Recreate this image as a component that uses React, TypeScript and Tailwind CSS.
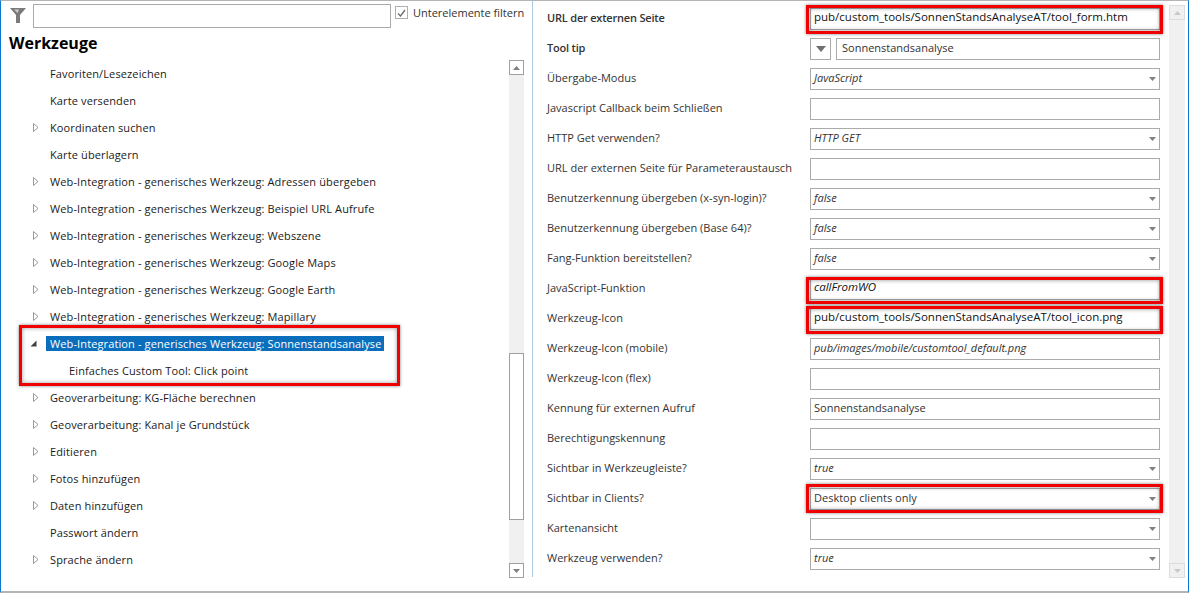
import React from 'react';

const treeTop = [
  { label: 'Favoriten/Lesezeichen' },
  { label: 'Karte versenden' },
  { label: 'Koordinaten suchen', arrow: true },
  { label: 'Karte überlagern' },
  { label: 'Web-Integration - generisches Werkzeug: Adressen übergeben', arrow: true },
  { label: 'Web-Integration - generisches Werkzeug: Beispiel URL Aufrufe', arrow: true },
  { label: 'Web-Integration - generisches Werkzeug: Webszene', arrow: true },
  { label: 'Web-Integration - generisches Werkzeug: Google Maps', arrow: true },
  { label: 'Web-Integration - generisches Werkzeug: Google Earth', arrow: true },
  { label: 'Web-Integration - generisches Werkzeug: Mapillary', arrow: true },
];

const treeBottom = [
  { label: 'Geoverarbeitung: KG-Fläche berechnen', arrow: true },
  { label: 'Geoverarbeitung: Kanal je Grundstück', arrow: true },
  { label: 'Editieren', arrow: true },
  { label: 'Fotos hinzufügen', arrow: true },
  { label: 'Daten hinzufügen', arrow: true },
  { label: 'Passwort ändern' },
  { label: 'Sprache ändern', arrow: true },
];

type Field = {
  label: string;
  value?: string;
  kind: 'text' | 'select' | 'tip';
  italic?: boolean;
  bold?: boolean;
  big?: boolean;
  red?: string;
};

const fields: Field[] = [
  { label: 'URL der externen Seite', value: 'pub/custom_tools/SonnenStandsAnalyseAT/tool_form.htm', kind: 'text', bold: true, big: true, red: '-top-[3px] -bottom-[4px]' },
  { label: 'Tool tip', value: 'Sonnenstandsanalyse', kind: 'tip', bold: true },
  { label: 'Übergabe-Modus', value: 'JavaScript', kind: 'select', italic: true },
  { label: 'Javascript Callback beim Schließen', kind: 'text' },
  { label: 'HTTP Get verwenden?', value: 'HTTP GET', kind: 'select', italic: true },
  { label: 'URL der externen Seite für Parameteraustausch', kind: 'text' },
  { label: 'Benutzerkennung übergeben (x-syn-login)?', value: 'false', kind: 'select', italic: true },
  { label: 'Benutzerkennung übergeben (Base 64)?', value: 'false', kind: 'select', italic: true },
  { label: 'Fang-Funktion bereitstellen?', value: 'false', kind: 'select', italic: true },
  { label: 'JavaScript-Funktion', value: 'callFromWO', kind: 'text', italic: true, big: true, red: '-top-[1px] -bottom-[4px]' },
  { label: 'Werkzeug-Icon', value: 'pub/custom_tools/SonnenStandsAnalyseAT/tool_icon.png', kind: 'text', big: true, red: '-top-[2px] -bottom-[4px]' },
  { label: 'Werkzeug-Icon (mobile)', value: 'pub/images/mobile/customtool_default.png', kind: 'text', italic: true },
  { label: 'Werkzeug-Icon (flex)', kind: 'text' },
  { label: 'Kennung für externen Aufruf', value: 'Sonnenstandsanalyse', kind: 'text' },
  { label: 'Berechtigungskennung', kind: 'text' },
  { label: 'Sichtbar in Werkzeugleiste?', value: 'true', kind: 'select', italic: true },
  { label: 'Sichtbar in Clients?', value: 'Desktop clients only', kind: 'select', red: '-top-[4px] -bottom-[3px]' },
  { label: 'Kartenansicht', kind: 'select' },
  { label: 'Werkzeug verwenden?', value: 'true', kind: 'select', italic: true },
];

const Arrow = ({ open }: { open?: boolean }) =>
  open ? (
    <svg width="7" height="7" viewBox="0 0 7 7" className="block">
      <path d="M6.5 0.5V6.5H0.5Z" fill="#404040" />
    </svg>
  ) : (
    <svg width="6" height="9" viewBox="0 0 6 9" className="block">
      <path d="M0.5 0.5L5 4.5L0.5 8.5Z" fill="#fff" stroke="#9a9a9a" />
    </svg>
  );

const Caret = ({ color = '#808080' }: { color?: string }) => (
  <svg width="7" height="4" viewBox="0 0 7 4" className="block">
    <path d="M0 0H7L3.5 4Z" fill={color} />
  </svg>
);

const CaretUp = ({ color = '#808080' }: { color?: string }) => (
  <svg width="7" height="4" viewBox="0 0 7 4" className="block">
    <path d="M0 4H7L3.5 0Z" fill={color} />
  </svg>
);

const TreeRow = ({ label, arrow }: { label: string; arrow?: boolean }) => (
  <div className="h-[27px] flex items-center">
    <div className="w-[49px] shrink-0 pl-[32px]">{arrow && <Arrow />}</div>
    <span className="text-[#1a1a1a] tracking-[0.12px] whitespace-nowrap">{label}</span>
  </div>
);

const FieldControl = ({ f }: { f: Field }) => {
  const box = 'h-[22px] flex items-center border border-[#ababab] bg-white px-[3px] pb-[4px] text-[#333] whitespace-nowrap';
  const cls = `${f.italic ? 'italic' : ''} ${f.big ? 'text-[11.5px] text-[#111]' : ''}`;
  if (f.kind === 'tip') {
    return (
      <div className="flex gap-[5px]">
        <div className="w-[21px] h-[22px] border border-[#ababab] flex items-center justify-center">
          <svg width="10" height="6" viewBox="0 0 10 6"><path d="M0 0H10L5 6Z" fill="#707070" /></svg>
        </div>
        <div className={`${box} flex-1 pl-[5px]`}>{f.value}</div>
      </div>
    );
  }
  if (f.kind === 'select') {
    return (
      <div className={`${box} justify-between pr-[3px]`}>
        <span className={cls}>{f.value}</span>
        <span className="pt-[4px]"><Caret /></span>
      </div>
    );
  }
  return (
    <div className={box}>
      <span className={cls}>{f.value}</span>
    </div>
  );
};

const FieldRow = ({ f }: { f: Field }) => (
  <div className="h-[30px] flex items-center">
    <div className={`w-[263px] shrink-0 pb-[3px] whitespace-nowrap text-[#333] ${f.bold ? 'font-semibold tracking-[-0.2px]' : ''}`}>{f.label}</div>
    <div className="w-[350px] relative">
      <FieldControl f={f} />
      {f.red && (
        <div className={`absolute -left-[4px] -right-[3px] ${f.red} border-[3px] border-[#f00000] shadow-[0_0_3px_rgba(0,0,0,0.5),inset_0_0_4px_rgba(0,0,0,0.45)]`} />
      )}
    </div>
  </div>
);

export default function App() {
  return (
    <div
      className="w-[1189px] h-[593px] overflow-hidden bg-white flex border-t border-t-[#b4b4b4] border-b-2 border-b-[#b4b4b4] border-l border-l-[#0a78d0] border-r border-r-[#0a78d0] text-[11px] leading-none"
      style={{ fontFamily: '"Open Sans", "Noto Sans", sans-serif' }}
    >
      <div className="w-[531px] shrink-0 h-[590px] flex flex-col">
        <div className="h-[27px] shrink-0 flex">
          <div className="w-[32px] pl-[9px] pt-[7px]">
            <svg width="16" height="15" viewBox="0 0 16 15" className="block">
              <path d="M0 0H16L10 7V15H6V7Z" fill="#7a7a7a" />
              <path d="M4 1.5H9L7.5 5Z" fill="#cfcfcf" />
            </svg>
          </div>
          <div className="w-[358px] h-[24px] mt-[3px] border border-[#ababab]" />
          <div className="ml-[4px] mt-[5px] w-[13px] h-[13px] border border-[#b0b0b0] flex items-center justify-center">
            <svg width="9" height="8" viewBox="0 0 9 8"><path d="M1 4.5L3.5 7L8 1" fill="none" stroke="#707070" strokeWidth="1.4" /></svg>
          </div>
          <span className="ml-[5px] mt-[6px] text-[#333] whitespace-nowrap">Unterelemente filtern</span>
        </div>
        <div className="h-[32px] shrink-0 pl-[8px] pb-[2px] flex items-center text-[16px] font-bold text-black">Werkzeuge</div>
        <div className="flex flex-1 min-h-0">
          <div className="w-[508px] shrink-0">
            {treeTop.map((r) => (
              <TreeRow key={r.label} {...r} />
            ))}
            <div className="relative">
              <div className="h-[27px] flex items-center">
                <div className="w-[45px] shrink-0 pl-[29px]"><Arrow open /></div>
                <span className="bg-[#0a6ebd] text-white h-[15px] w-[338px] pl-[4px] flex items-center tracking-[0.12px] whitespace-nowrap">
                  Web-Integration - generisches Werkzeug: Sonnenstandsanalyse
                </span>
              </div>
              <div className="h-[27px] flex items-center pl-[68px] text-[#1a1a1a] tracking-[0.12px] whitespace-nowrap">Einfaches Custom Tool: Click point</div>
              <div className="absolute left-[18px] top-[-5px] w-[381px] h-[61px] border-[3px] border-[#f00000] shadow-[0_0_3px_rgba(0,0,0,0.5),inset_0_0_4px_rgba(0,0,0,0.4)]" />
            </div>
            {treeBottom.map((r) => (
              <TreeRow key={r.label} {...r} />
            ))}
          </div>
          <div className="w-[15px] h-[518px] bg-[#f0f0f0] flex flex-col">
            <div className="h-[15px] border border-[#a0a0a0] bg-white flex items-center justify-center"><CaretUp /></div>
            <div className="h-[278px]" />
            <div className="h-[167px] border border-[#a0a0a0] bg-white" />
            <div className="h-[43px]" />
            <div className="h-[15px] border border-[#a0a0a0] bg-white flex items-center justify-center"><Caret /></div>
          </div>
        </div>
      </div>
      <div className="h-[576px] border-l border-l-[#a9cbe6]" />
      <div className="flex-1 h-[590px] pl-[14px] pt-[3px] flex">
        <div className="flex flex-col">
          {fields.map((f) => (
            <FieldRow key={f.label} f={f} />
          ))}
        </div>
        <div className="ml-[9px] mt-[1px] w-[16px] h-[573px] bg-[#f0f0f0] flex flex-col justify-between">
          <div className="h-[15px] border border-[#dcdcdc] flex items-center justify-center"><CaretUp color="#c8c8c8" /></div>
          <div className="h-[15px] border border-[#dcdcdc] flex items-center justify-center"><Caret color="#c8c8c8" /></div>
        </div>
      </div>
    </div>
  );
}
